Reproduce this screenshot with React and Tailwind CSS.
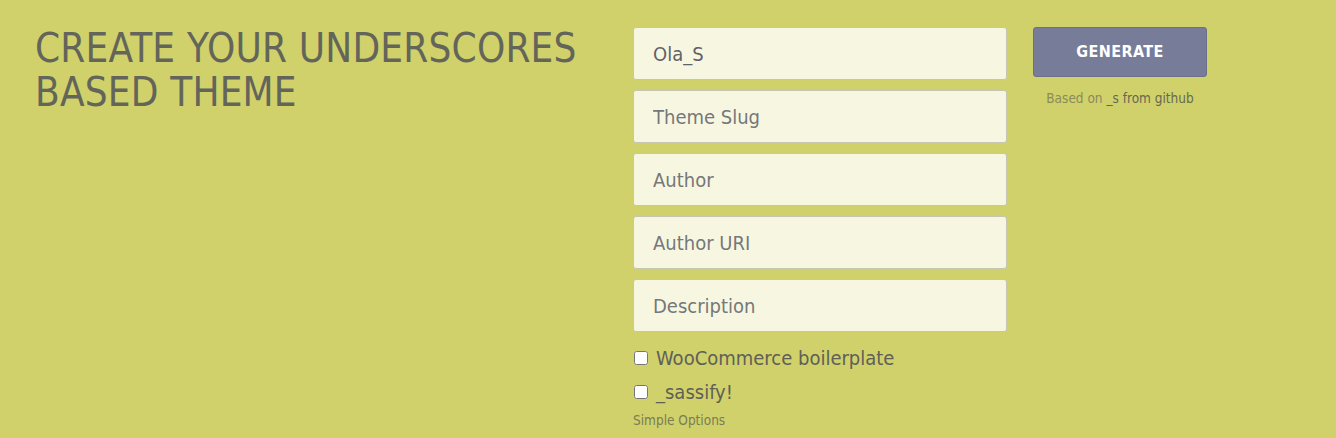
import { useState } from "react";

const font = { fontFamily: '"Liberation Sans Narrow", "DejaVu Sans Condensed", "Liberation Sans", sans-serif' };

function App() {
  const [nombre, setNombre] = useState("Ola_S");

  const campos = ["Theme Slug", "Author", "Author URI", "Description"];

  return (
    <div className="w-[1336px] h-[438px] bg-[#d0d16a] overflow-hidden" style={font}>
      <div className="flex pt-[27px]">
        {/* TITULO */}
        <div className="w-[633px] pl-[35px]">
          <h1 className="text-[40px] leading-[44px] text-[#63655a] uppercase tracking-[0.2px] -mt-[1px]">
            Create your underscores
            <br />
            based theme
          </h1>
        </div>

        {/* FORMULARIO */}
        <div className="w-[374px] flex flex-col gap-[10px]">
          <input
            value={nombre}
            onChange={(e) => setNombre(e.target.value)}
            className="h-[53px] bg-[#f7f7e1] border border-[#c6c6b4] rounded-[3px] px-[19px] text-[20px] text-[#5f6168] outline-none"
          />
          {campos.map((c) => (
            <input
              key={c}
              placeholder={c}
              className="h-[53px] bg-[#f7f7e1] border border-[#c6c6b4] rounded-[3px] px-[19px] text-[20px] text-[#5f6168] placeholder:text-[#75777a] outline-none"
            />
          ))}

          <div className="flex flex-col -mt-[1px]">
            <label className="flex items-center gap-[8px] h-[34px] text-[20px] text-[#5e6058]">
              <input type="checkbox" className="w-[14px] h-[14px] ml-[1px]" />
              WooCommerce boilerplate
            </label>
            <label className="flex items-center gap-[8px] h-[34px] text-[20px] text-[#5e6058]">
              <input type="checkbox" className="w-[14px] h-[14px] ml-[1px]" />
              _sassify!
            </label>
            <span className="text-[13.5px] text-[#7b7c55] mt-[1px]">Simple Options</span>
          </div>
        </div>

        {/* BOTON */}
        <div className="ml-[26px] w-[174px] flex flex-col items-center">
          <button className="w-[174px] h-[50px] bg-[#777c98] border border-[#6a6f8a] rounded-[3px] text-white font-bold text-[16px] tracking-wide">
            GENERATE
          </button>
          <p className="mt-[11px] text-[13.5px] text-[#8a8b59]">
            Based on <span className="text-[#67694f]">_s from github</span>
          </p>
        </div>
      </div>
    </div>
  );
}

export default App;
